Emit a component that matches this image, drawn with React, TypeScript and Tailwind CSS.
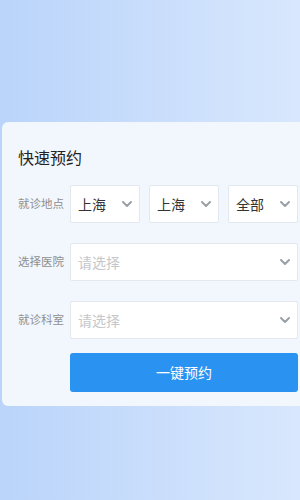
import React from 'react';

const Chevron = () => (
  <svg width="12" height="12" viewBox="0 0 12 12" fill="none" className="shrink-0">
    <path d="M2 4l4 4 4-4" stroke="#9aa0a8" strokeWidth="2" strokeLinecap="round" strokeLinejoin="round" />
  </svg>
);

const Select = ({ value, placeholder, className = '' }: { value?: string; placeholder?: string; className?: string }) => (
  <div className={`h-[38px] bg-white border border-[#e3e8f0] rounded-[2px] flex items-center justify-between pl-[7px] pr-[6px] ${className}`}>
    {value ? (
      <span className="text-[14px] text-[#333]">{value}</span>
    ) : (
      <span className="text-[14px] text-[#c4c7cc]">{placeholder}</span>
    )}
    <Chevron />
  </div>
);

const Row = ({ label, children }: { label: string; children: React.ReactNode }) => (
  <div className="flex items-center">
    <span className="w-[52px] shrink-0 text-[11.5px] text-[#8f8f8f]">{label}</span>
    <div className="w-[228px] flex gap-[9px]">{children}</div>
  </div>
);

export default function App() {
  return (
    <div
      className="w-[300px] h-[500px] overflow-hidden bg-gradient-to-r from-[#bad4fa] to-[#d8e7fd] pt-[122px]"
      style={{ fontFamily: '"Noto Sans CJK SC", "Noto Sans", sans-serif' }}
    >
      <div className="ml-[2px] w-[320px] bg-[#f2f6fd] rounded-[6px] pl-[16px] pt-[23px] pb-[14px] flex flex-col">
        <h2 className="text-[16px] leading-[24px] text-[#222] font-normal mb-[16px]">快速预约</h2>
        <div className="flex flex-col gap-[20px]">
          <Row label="就诊地点">
            <Select value="上海" className="w-[70px]" />
            <Select value="上海" className="w-[70px]" />
            <Select value="全部" className="w-[70px]" />
          </Row>
          <Row label="选择医院">
            <Select placeholder="请选择" className="flex-1" />
          </Row>
          <Row label="就诊科室">
            <Select placeholder="请选择" className="flex-1" />
          </Row>
        </div>
        <div className="flex mt-[14px]">
          <div className="w-[52px]" />
          <button className="w-[228px] h-[39px] bg-[#2a93f1] rounded-[3px] text-white text-[14px]">一键预约</button>
        </div>
      </div>
    </div>
  );
}
